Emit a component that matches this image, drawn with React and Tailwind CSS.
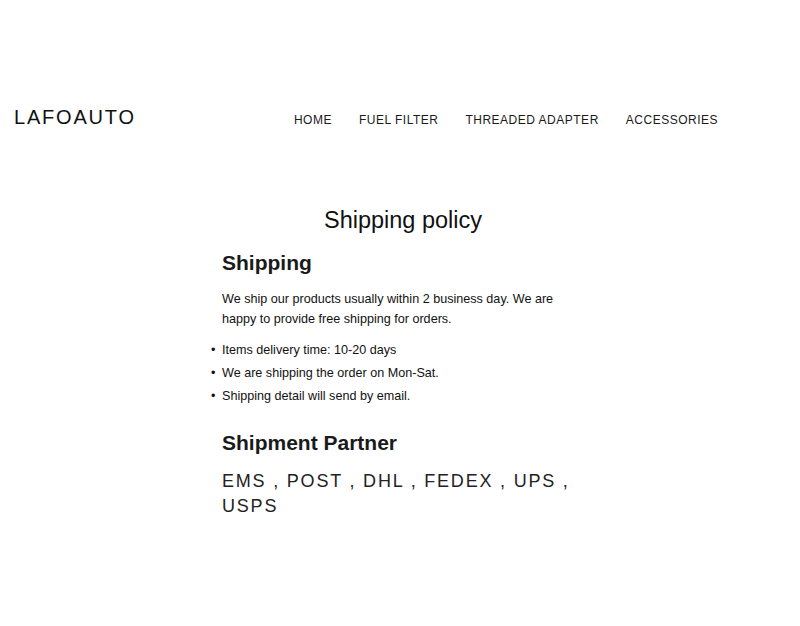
export default function App() {
  const nav = ['HOME', 'FUEL FILTER', 'THREADED ADAPTER', 'ACCESSORIES']
  const bullets = [
    'Items delivery time: 10-20 days',
    'We are shipping the order on Mon-Sat.',
    'Shipping detail will send by email.',
  ]

  return (
    <div className="min-h-[626px] bg-white text-[#111] font-['Liberation_Sans',Arial,sans-serif]">
      <header className="flex items-center justify-between pt-[100px] pl-[14px] pr-[82px] h-[136px]">
        <a className="text-[20px] leading-6 tracking-[1.8px] text-[#111] mt-[-2px]">LAFOAUTO</a>
        <nav className="flex items-center gap-[27px] mt-[4px]">
          {nav.map((item) => (
            <a key={item} className="text-[12px] leading-4 tracking-[0.5px] text-[#1a1a1a]">
              {item}
            </a>
          ))}
        </nav>
      </header>

      <main className="ml-[222px] w-[362px] pt-[68px]">
        <h1 className="text-[23.5px] leading-8 text-center text-[#111]">Shipping policy</h1>

        <h2 className="mt-[13px] text-[21px] leading-7 font-bold text-[#1a1a1a]">Shipping</h2>
        <p className="mt-[12px] text-[12.6px] leading-5 text-[#111]">
          We ship our products usually within 2 business day. We are happy to provide free shipping for orders.
        </p>

        <ul className="mt-[10px]">
          {bullets.map((b) => (
            <li key={b} className="relative text-[12.6px] leading-[23px]">
              <span className="absolute left-[-11px] top-0">•</span>
              {b}
            </li>
          ))}
        </ul>

        <h2 className="mt-[21px] text-[21px] leading-7 font-bold text-[#1a1a1a]">Shipment Partner</h2>
        <p className="mt-[12px] text-[18px] leading-[25px] tracking-[1.8px] text-[#222]">
          EMS , POST , DHL , FEDEX , UPS , USPS
        </p>
      </main>
    </div>
  )
}
